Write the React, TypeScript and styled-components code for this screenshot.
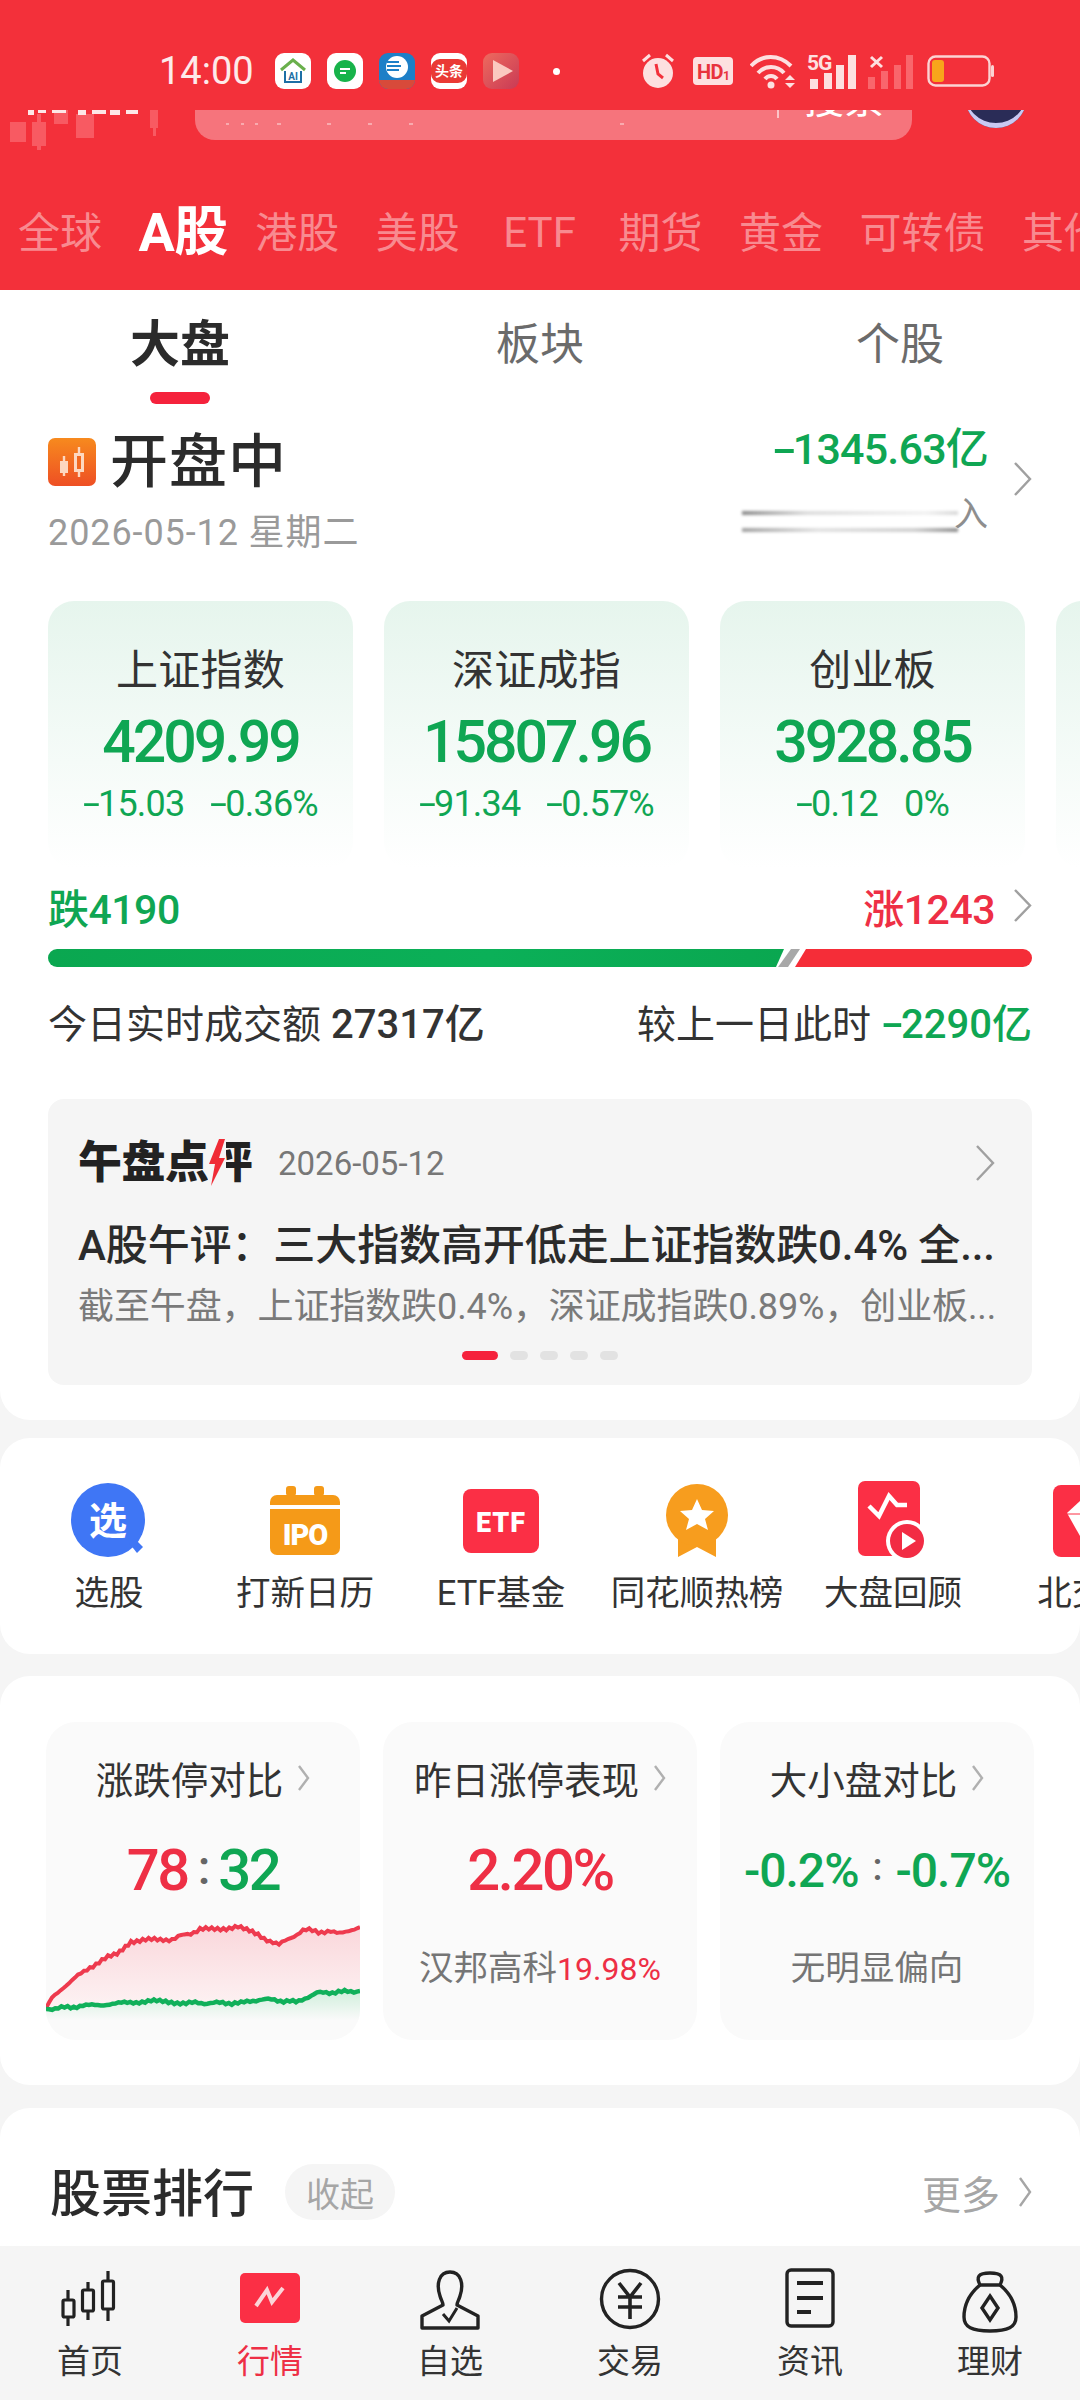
import React from 'react';
import styled, { createGlobalStyle } from 'styled-components';

const GlobalStyle = createGlobalStyle`
  html, body {
    margin: 0;
    padding: 0;
    background: #f5f5f5;
  }
  * { box-sizing: border-box; }
  body {
    font-family: Roboto, "Noto Sans CJK SC", sans-serif;
  }
`;

const GREEN = '#0fa653';
const RED = '#ee2f45';

const Page = styled.div`
  width: 1080px;
  height: 2400px;
  overflow: hidden;
  background: #f5f5f5;
  display: flex;
  flex-direction: column;
`;

/* ---------- red header ---------- */
const Header = styled.header`
  height: 290px;
  flex: none;
  background: #f3303a;
  display: flex;
  flex-direction: column;
`;

const StatusBar = styled.div`
  height: 110px;
  flex: none;
  padding: 53px 0 0 159px;
  display: flex;
  align-items: flex-start;
  color: #fdeaea;
`;

const Clock = styled.span`
  font-size: 38px;
  line-height: 36px;
  width: 116px;
  flex: none;
`;

const AppIcons = styled.div`
  display: flex;
  gap: 16px;
`;

const Tile = styled.div<{ $bg: string }>`
  width: 36px;
  height: 36px;
  border-radius: 9px;
  background: ${p => p.$bg};
  overflow: hidden;
  display: flex;
  align-items: center;
  justify-content: center;
  flex: none;
`;

const TopTile = styled(Tile)`
  color: #fff;
  font-size: 14px;
  font-weight: 700;
  box-shadow: inset 0 6px 0 #fff, inset 0 -6px 0 #fff;
  line-height: 1;
`;

const Dot = styled.span`
  width: 7px;
  height: 7px;
  border-radius: 50%;
  background: #fff;
  margin: 15px 0 0 34px;
  flex: none;
`;

const SysIcons = styled.div`
  display: flex;
  margin-left: 80px;
  height: 36px;
  align-items: center;
`;

const Glyph = styled.svg<{ $ml?: number }>`
  margin-left: ${p => p.$ml ?? 0}px;
  flex: none;
`;

const SearchRow = styled.div`
  height: 40px;
  flex: none;
  overflow: hidden;
  display: flex;
  align-items: flex-end;
  position: relative;
`;

const LogoMark = styled.svg`
  position: absolute;
  left: 10px;
  top: 0;
`;

const SearchBox = styled.div`
  margin-left: 195px;
  width: 717px;
  height: 90px;
  margin-bottom: 10px;
  flex: none;
  border-radius: 20px;
  background: #f6747c;
  display: flex;
  align-items: flex-start;
  justify-content: flex-end;
  padding: 28px 28px 0 0;
  color: #fff;
  font-size: 40px;
  line-height: 44px;
  position: relative;
`;

const SearchDivider = styled.span`
  width: 2px;
  height: 40px;
  background: #fbc4c7;
  margin: 0 25px 0 0;
`;

const PlaceholderDots = styled.svg`
  position: absolute;
  left: 30px;
  bottom: 13px;
  opacity: 0.6;
`;

const Avatar = styled.div`
  position: absolute;
  left: 965px;
  bottom: 22px;
  width: 62px;
  height: 62px;
  border-radius: 50%;
  background: #2a2c57;
  box-shadow: inset 0 -5px 0 #c9c8f2;
`;

const MarketTabs = styled.nav`
  display: flex;
  align-items: center;
  gap: 36.5px;
  padding: 0 0 0 18px;
  margin-top: 49px;
  height: 60px;
  white-space: nowrap;
  overflow: hidden;
`;

const MarketTab = styled.span<{ $active?: boolean; $latin?: boolean }>`
  font-size: ${p => (p.$active ? 54 : 42)}px;
  font-weight: ${p => (p.$active ? 700 : 400)};
  color: ${p => (p.$active ? '#fff' : '#f88a90')};
  flex: none;
  ${p => p.$active && 'margin: -3px -9px 0 0; letter-spacing: -0.5px;'}
  ${p => p.$latin && 'margin: 6px 6px 0 7px;'}
`;

/* ---------- panels ---------- */
const Panel = styled.section<{ $height: number; $gap?: number }>`
  background: #fff;
  border-radius: 30px;
  height: ${p => p.$height}px;
  margin-top: ${p => p.$gap ?? 0}px;
  flex: none;
  overflow: hidden;
`;

const MainPanel = styled(Panel)`
  border-radius: 0 0 30px 30px;
  padding: 0 48px;
`;

const RankPanel = styled(Panel)`
  border-radius: 30px 30px 0 0;
`;

const SegTabs = styled.div`
  display: grid;
  grid-template-columns: repeat(3, 360px);
  margin: 0 -48px;
  height: 122px;
`;

const SegTab = styled.div<{ $active?: boolean }>`
  position: relative;
  text-align: center;
  padding-top: 24px;
  font-size: ${p => (p.$active ? 50 : 44)}px;
  line-height: 62px;
  font-weight: ${p => (p.$active ? 700 : 400)};
  color: ${p => (p.$active ? '#2b2b2b' : '#6b6b6b')};
`;

const SegMark = styled.span`
  position: absolute;
  left: 150px;
  top: 102px;
  width: 60px;
  height: 12px;
  border-radius: 6px;
  background: #f5223c;
`;

const SessionRow = styled.div`
  height: 189px;
  display: flex;
  justify-content: space-between;
`;

const SessionLeft = styled.div`
  padding-top: 22px;
`;

const SessionTitle = styled.div`
  display: flex;
  align-items: center;
  gap: 14px;
  font-size: 58px;
  line-height: 58px;
  font-weight: 500;
  color: #2b2b2b;
  letter-spacing: 1px;
  margin-top: -1px;
`;

const SessionDate = styled.div`
  margin-top: 20px;
  font-size: 36px;
  line-height: 44px;
  color: #9a9a9a;
  letter-spacing: 0.9px;
`;

const SessionRight = styled.div`
  position: relative;
  width: 290px;
  padding: 12px 44px 0 0;
  text-align: right;
`;

const NetFlow = styled.div`
  font-size: 43px;
  line-height: 50px;
  font-weight: 500;
  color: ${GREEN};
  white-space: nowrap;
  letter-spacing: -0.8px;
`;

const NetLabel = styled.div`
  margin-top: 18px;
  font-size: 34px;
  line-height: 44px;
  color: #8e8e8e;
`;

const Smudge = styled.span<{ $top: number; $fade: string }>`
  position: absolute;
  left: 0;
  top: ${p => p.$top}px;
  width: 216px;
  height: 4px;
  background: ${p => p.$fade};
  filter: blur(1.5px);
`;

const ChevronBox = styled.svg`
  flex: none;
  display: block;
`;

const SessionChevron = styled(ChevronBox)`
  position: absolute;
  right: 0;
  top: 50px;
`;

// the minus sign of this app's digit font is about twice as wide as a hyphen
const Neg = styled.span`
  display: inline-block;
  transform: scaleX(1.7);
  transform-origin: left center;
  margin-right: 0.16em;
`;

const signed = (value: string) =>
  value.startsWith('-') ? (
    <>
      <Neg>-</Neg>
      {value.slice(1)}
    </>
  ) : (
    value
  );

const IndexScroller = styled.div`
  display: flex;
  gap: 31px;
  margin-right: -48px;
  height: 267px;
  overflow: hidden;
`;

const IndexCard = styled.div`
  width: 305px;
  height: 267px;
  flex: none;
  border-radius: 26px;
  background: linear-gradient(180deg, #e6f5ed 0%, #f5fbf8 60%, #ffffff 100%);
  text-align: center;
  padding-top: 46px;
`;

const IndexName = styled.div`
  font-size: 42px;
  line-height: 48px;
  color: #333;
  letter-spacing: 0.2px;
`;

const IndexValue = styled.div`
  margin-top: 14px;
  font-size: 59px;
  line-height: 66px;
  font-weight: 500;
  color: ${GREEN};
  letter-spacing: -3px;
`;

const IndexChange = styled.div`
  margin-top: 9px;
  font-size: 36px;
  line-height: 40px;
  color: ${GREEN};
  display: flex;
  justify-content: center;
  gap: 26px;
  letter-spacing: -0.8px;
`;

const BreadthRow = styled.div`
  height: 81px;
  display: flex;
  align-items: center;
  font-size: 41px;
  font-weight: 500;
  padding-bottom: 6px;
  letter-spacing: -0.5px;
`;

const Fall = styled.span`
  color: ${GREEN};
`;

const Rise = styled.span`
  color: ${RED};
  margin-left: auto;
  margin-right: 18px;
`;

const Bar = styled.div`
  display: flex;
  height: 18px;
`;

const BarFall = styled.div`
  width: 736px;
  flex: none;
  background: linear-gradient(90deg, #0aa750, #0bb058 60%, #0aa750);
  border-radius: 9px 0 0 9px;
  clip-path: polygon(0 0, 100% 0, calc(100% - 8px) 100%, 0 100%);
`;

const BarFlat = styled.div`
  width: 22px;
  flex: none;
  margin-left: -6px;
  background: #a8a8a8;
  clip-path: polygon(13px 0, 100% 0, 10px 100%, 0 100%);
`;

const BarRise = styled.div`
  flex: 1;
  margin-left: -5px;
  background: #f52d38;
  border-radius: 0 9px 9px 0;
  clip-path: polygon(11px 0, 100% 0, 100% 100%, 0 100%);
`;

const TurnoverRow = styled.div`
  height: 116px;
  padding-bottom: 8px;
  display: flex;
  align-items: center;
  justify-content: space-between;
  font-size: 39px;
  color: #333;
`;

const TurnoverValue = styled.b<{ $green?: boolean }>`
  font-weight: 500;
  margin-left: 10px;
  font-size: 40px;
  color: ${p => (p.$green ? GREEN : '#333')};
`;

const NewsCard = styled.div`
  margin-top: 16px;
  height: 286px;
  border-radius: 16px;
  background: #f5f5f5;
  padding: 36px 30px 0;
  position: relative;
`;

const NewsHead = styled.div`
  display: flex;
  align-items: center;
  height: 56px;
`;

const NewsBrand = styled.div`
  position: relative;
  font-size: 44px;
  font-weight: 900;
  line-height: 56px;
  color: #222;
  letter-spacing: -0.5px;
  margin-right: 26px;
`;

const BrandBolt = styled.svg`
  position: absolute;
  left: 130px;
  top: 4px;
`;

const NewsDate = styled.span`
  font-size: 33px;
  color: #777;
`;

const NewsChevron = styled(ChevronBox)`
  margin-left: auto;
  margin-right: 7px;
`;

const NewsTitle = styled.div`
  margin-top: 28px;
  font-size: 42px;
  line-height: 54px;
  font-weight: 500;
  color: #2b2b2b;
  white-space: nowrap;
  letter-spacing: -0.1px;
`;

const NewsText = styled.div`
  margin-top: 8px;
  font-size: 36px;
  line-height: 52px;
  color: #7a7a7a;
  white-space: nowrap;
  letter-spacing: -0.1px;
`;

const Pager = styled.div`
  position: absolute;
  left: 414px;
  top: 252px;
  display: flex;
  align-items: center;
  gap: 12px;
`;

const PagerDot = styled.span<{ $active?: boolean }>`
  width: ${p => (p.$active ? 36 : 18)}px;
  height: 9px;
  border-radius: 5px;
  background: ${p => (p.$active ? '#f5223c' : '#e2e2e2')};
`;

/* ---------- shortcut row ---------- */
const Shortcuts = styled.div`
  display: flex;
  padding: 40px 0 0 11px;
`;

const Shortcut = styled.div`
  width: 196px;
  flex: none;
  display: flex;
  flex-direction: column;
  align-items: center;
  font-size: 34.5px;
  color: #333;
  white-space: nowrap;
`;

const ShortcutIcon = styled.div`
  height: 85px;
  display: flex;
  align-items: center;
  justify-content: center;
`;

const ShortcutLabel = styled.span`
  line-height: 60px;
`;

/* ---------- stat cards ---------- */
const StatGrid = styled.div`
  display: grid;
  grid-template-columns: repeat(3, 314px);
  gap: 23px;
  padding: 46px 0 0 46px;
`;

const StatCard = styled.div`
  height: 318px;
  border-radius: 30px;
  background: #fafafa;
  overflow: hidden;
  text-align: center;
`;

const StatTitle = styled.div`
  height: 116px;
  padding-bottom: 5px;
  display: flex;
  align-items: center;
  justify-content: center;
  gap: 14px;
  font-size: 37.5px;
  color: #333;
`;

const StatValue = styled.div`
  height: 64px;
  display: flex;
  align-items: center;
  justify-content: center;
  font-size: 58px;
  font-weight: 500;
  color: ${RED};
  gap: 10px;
  letter-spacing: -2.4px;
`;

const SmallValue = styled(StatValue)`
  font-size: 48px;
  gap: 14px;
  color: ${GREEN};
  letter-spacing: -1px;
`;

const Colon = styled.span<{ $small?: boolean }>`
  color: #666;
  font-size: ${p => (p.$small ? 38 : 48)}px;
  margin-top: -6px;
`;

const GreenNum = styled.span`
  color: ${GREEN};
`;

const StatSub = styled.div`
  margin-top: 43px;
  height: 46px;
  font-size: 34.5px;
  line-height: 46px;
  color: #757575;
  white-space: nowrap;
`;

const SubRed = styled.span`
  color: ${RED};
  font-size: 32px;
`;

const Spark = styled.svg`
  display: block;
  margin-top: 18px;
`;

/* ---------- ranking ---------- */
const RankHead = styled.div`
  display: flex;
  align-items: center;
  padding: 53px 48px 0 50px;
`;

const RankTitle = styled.span`
  font-size: 51px;
  line-height: 56px;
  padding-top: 6px;
  font-weight: 500;
  color: #2b2b2b;
`;

const CollapseChip = styled.span`
  margin-left: 31px;
  width: 110px;
  height: 56px;
  border-radius: 28px;
  background: #f5f5f5;
  color: #a6a6a6;
  font-size: 34px;
  display: flex;
  align-items: center;
  justify-content: center;
`;

const More = styled.span`
  margin-left: auto;
  margin-right: 18px;
  font-size: 39px;
  color: #a6a6a6;
`;

/* ---------- bottom tab bar ---------- */
const TabBar = styled.nav`
  height: 154px;
  flex: none;
  display: grid;
  grid-template-columns: repeat(6, 180px);
  background: #f5f5f5;
`;

const TabItem = styled.div<{ $active?: boolean }>`
  display: flex;
  flex-direction: column;
  align-items: center;
  font-size: 33px;
  color: ${p => (p.$active ? RED : '#333')};
`;

const TabIcon = styled.div<{ $top: number }>`
  height: 92px;
  padding-top: ${p => p.$top}px;
  display: flex;
  align-items: flex-start;
  justify-content: center;
`;

const TabLabel = styled.span`
  line-height: 48px;
`;

const Chevron = ({ w = 19, h = 33, color = '#a0a0a0' }: { w?: number; h?: number; color?: string }) => (
  <ChevronBox width={w} height={h} viewBox={`0 0 ${w} ${h}`} fill="none">
    <polyline points={`2,1 ${w - 2},${h / 2} 2,${h - 1}`} stroke={color} strokeWidth="2.4" />
  </ChevronBox>
);

// rough intraday line, small ripple is added so it reads like tick data
const ripple = (pts: number[][], amp: number) => {
  const out: string[] = [];
  for (let i = 0; i < pts.length - 1; i++) {
    const [x0, y0] = pts[i];
    const [x1, y1] = pts[i + 1];
    const steps = Math.max(1, Math.round((x1 - x0) / 3));
    for (let s = 0; s < steps; s++) {
      const x = x0 + ((x1 - x0) * s) / steps;
      const y = y0 + ((y1 - y0) * s) / steps + Math.sin(x * 1.7) * Math.cos(x * 0.61) * amp;
      out.push(`${x.toFixed(1)},${y.toFixed(1)}`);
    }
  }
  const last = pts[pts.length - 1];
  out.push(`${last[0]},${last[1]}`);
  return out;
};

const redLine = ripple(
  [[0, 88], [6, 76], [23, 63], [44, 47], [71, 33], [85, 21], [126, 19], [154, 10], [192, 7], [212, 15], [233, 25], [257, 10], [291, 13], [314, 7]],
  2.4
);
const greenLine = ripple(
  [[0, 89], [37, 86], [105, 81], [140, 83], [195, 83], [216, 79], [250, 82], [271, 73], [314, 71]],
  1.8
);

const SparkChart = () => (
  <Spark width="314" height="120" viewBox="0 0 314 120">
    <defs>
      <linearGradient id="riseFill" x1="0" y1="0" x2="0" y2="1">
        <stop offset="0" stopColor="#fad7db" />
        <stop offset="1" stopColor="#fdf3f4" />
      </linearGradient>
      <linearGradient id="fallFill" x1="0" y1="0" x2="0" y2="1">
        <stop offset="0" stopColor="#cfeedb" />
        <stop offset="1" stopColor="#fafafa" />
      </linearGradient>
    </defs>
    <polygon points={`${redLine.join(' ')} ${[...greenLine].reverse().join(' ')}`} fill="url(#riseFill)" />
    <polygon points={`${greenLine.join(' ')} 314,100 0,100`} fill="url(#fallFill)" />
    <polyline points={redLine.join(' ')} fill="none" stroke="#ee3a4e" strokeWidth="4" />
    <polyline points={greenLine.join(' ')} fill="none" stroke="#10b05a" strokeWidth="4.5" />
  </Spark>
);

const PickIcon = () => (
  <svg width="76" height="76" viewBox="0 0 76 76">
    <circle cx="37" cy="37" r="37" fill="#3f76f5" />
    <path d="M58 60 L66 70 L72 64 L63 55 Z" fill="#3f76f5" />
    <text x="37" y="51" textAnchor="middle" fontSize="38" fontWeight="700" fill="#fff" fontFamily="Noto Sans CJK SC">选</text>
  </svg>
);

const IpoIcon = () => (
  <svg width="70" height="70" viewBox="0 0 70 70">
    <rect x="16" y="0" width="10" height="10" rx="3" fill="#f59a18" />
    <rect x="44" y="0" width="10" height="10" rx="3" fill="#f59a18" />
    <path d="M0 16 a7 7 0 0 1 7-7 H63 a7 7 0 0 1 7 7 V19 H0 Z" fill="#f59a18" />
    <path d="M0 23 H70 V62 a7 7 0 0 1-7 7 H7 a7 7 0 0 1-7-7 Z" fill="#f59a18" />
    <text x="35" y="59" textAnchor="middle" fontSize="29" fontWeight="900" letterSpacing="-1" fill="#fff" fontFamily="Roboto">IPO</text>
  </svg>
);

const EtfIcon = () => (
  <svg width="76" height="64" viewBox="0 0 76 64">
    <rect width="76" height="64" rx="8" fill="#fb2f45" />
    <text x="38" y="43" textAnchor="middle" fontSize="27" fontWeight="900" letterSpacing="1" fill="#fff" fontFamily="Roboto">ETF</text>
  </svg>
);

const MedalIcon = () => (
  <svg width="62" height="74" viewBox="0 0 62 74">
    <path d="M12 50 V73 L31 63 L50 73 V50 Z" fill="#f79d1e" />
    <circle cx="31" cy="31" r="31" fill="#f79d1e" />
    <polygon points="31,15 36,26 48,27 39,35 42,46 31,40 20,46 23,35 14,27 26,26" fill="#fff" />
  </svg>
);

const ReplayIcon = () => (
  <svg width="70" height="80" viewBox="0 0 70 80">
    <rect width="62" height="75" rx="7" fill="#fb2f45" />
    <polyline points="11,25 21,35 31,15 39,24 49,24" fill="none" stroke="#fff" strokeWidth="4.5" />
    <circle cx="49" cy="60" r="21" fill="#fff" />
    <circle cx="49" cy="60" r="17" fill="#f22c44" />
    <polygon points="44,51 44,69 58,60" fill="#fff" />
  </svg>
);

const BeijingIcon = () => (
  <svg width="72" height="72" viewBox="0 0 72 72">
    <rect width="80" height="72" rx="8" fill="#fb2f45" />
    <path d="M14 28 L28 15 H60 V45 L32 60 Z" fill="#fff" />
    <path d="M14 29 H30" stroke="#fb2f45" strokeWidth="1" />
  </svg>
);

const CandleIcon = () => (
  <svg width="60" height="56" viewBox="0 0 60 56" fill="none" stroke="#222" strokeWidth="3.2">
    <path d="M8 19 V29 M8 46 V55" />
    <rect x="3" y="29" width="11" height="17" rx="1.5" />
    <path d="M28 11 V19 M28 40 V49" />
    <rect x="22.5" y="19" width="11" height="21" rx="1.5" />
    <path d="M48 0 V10 M48 38 V50" />
    <rect x="42.5" y="10" width="11" height="28" rx="1.5" />
  </svg>
);

const QuoteIcon = () => (
  <svg width="60" height="50" viewBox="0 0 60 50">
    <rect width="60" height="50" rx="5" fill="#fb2f45" />
    <polyline points="16,33 27,17 32,29 43,15" fill="none" stroke="#fbd5d8" strokeWidth="4" />
  </svg>
);

const PersonIcon = () => (
  <svg width="62" height="60" viewBox="0 0 62 60" fill="none" stroke="#222" strokeWidth="3.4">
    <path d="M21 26 C17 14 20 2 31 2 C42 2 45 14 41 26 C40 30 38 32 38 35 L59 46 V58 H3 V46 L24 35 C24 32 22 30 21 26 Z" strokeLinejoin="round" />
    <polyline points="24,44 30,51 38,38" strokeWidth="3" />
  </svg>
);

const YenIcon = () => (
  <svg width="62" height="62" viewBox="0 0 62 62" fill="none" stroke="#222" strokeWidth="3.4">
    <circle cx="31" cy="31" r="28.5" />
    <path d="M20 15 L31 29 L42 15 M19 29 H43 M19 39 H43 M31 29 V51" strokeWidth="3.6" />
  </svg>
);

const DocIcon = () => (
  <svg width="50" height="60" viewBox="0 0 50 60" fill="none" stroke="#222" strokeWidth="3.4">
    <rect x="2" y="2" width="46" height="56" rx="4" />
    <path d="M12 15 H38 M12 30 H38 M12 44 H26" strokeWidth="3.8" />
  </svg>
);

const BagIcon = () => (
  <svg width="56" height="62" viewBox="0 0 56 62" fill="none" stroke="#222" strokeWidth="3.4">
    <path d="M18 14 C14 6 16 2 28 2 C40 2 42 6 38 14 Z" strokeLinejoin="round" />
    <path d="M18 14 C6 24 2 36 2 46 C2 56 10 60 28 60 C46 60 54 56 54 46 C54 36 50 24 38 14" />
    <polygon points="28,25 36,37 28,49 20,37" />
  </svg>
);

const indices = [
  { name: '上证指数', value: '4209.99', diff: '-15.03', pct: '-0.36%' },
  { name: '深证成指', value: '15807.96', diff: '-91.34', pct: '-0.57%' },
  { name: '创业板', value: '3928.85', diff: '-0.12', pct: '0%' },
  { name: '', value: '', diff: '', pct: '' },
];

const shortcuts: [string, React.ReactNode][] = [
  ['选股', <PickIcon />],
  ['打新日历', <IpoIcon />],
  ['ETF基金', <EtfIcon />],
  ['同花顺热榜', <MedalIcon />],
  ['大盘回顾', <ReplayIcon />],
  ['北交所', <BeijingIcon />],
];

const tabs: [string, React.ReactNode, number][] = [
  ['首页', <CandleIcon />, 25],
  ['行情', <QuoteIcon />, 27],
  ['自选', <PersonIcon />, 24],
  ['交易', <YenIcon />, 22],
  ['资讯', <DocIcon />, 22],
  ['理财', <BagIcon />, 25],
];

const StatusIcons = () => (
  <SysIcons>
    <Glyph width="36" height="38" viewBox="0 0 36 38">
      <circle cx="18" cy="21" r="15" fill="#fde0e0" />
      <path d="M3 9 L10 3 M33 9 L26 3" stroke="#fde0e0" strokeWidth="3" />
      <path d="M16 12 L18 22 L23 26" stroke="#f3303a" strokeWidth="3" fill="none" />
    </Glyph>
    <Glyph $ml={17} width="40" height="28" viewBox="0 0 40 28">
      <rect width="40" height="28" rx="4" fill="#fde0e0" />
      <text x="4" y="22" fontSize="20" fontWeight="700" fill="#e8333d" fontFamily="Roboto" letterSpacing="-0.5">HD</text>
      <text x="30" y="23" fontSize="12" fontWeight="700" fill="#e8333d" fontFamily="Roboto">1</text>
    </Glyph>
    <Glyph $ml={17} width="46" height="36" viewBox="0 0 46 36" fill="none" stroke="#fde0e0" strokeWidth="4">
      <path d="M1 13 C12 1 29 1 41 13" />
      <path d="M8 20 C15 12 27 12 34 20" />
      <path d="M15 26 C18 22 24 22 27 26" />
      <circle cx="21" cy="32" r="3.5" fill="#fde0e0" stroke="none" />
      <polygon points="40,22 45,27 35,27" fill="#fde0e0" stroke="none" />
      <polygon points="35,30 45,30 40,35" fill="#fde0e0" stroke="none" />
    </Glyph>
    <Glyph $ml={11} width="50" height="36" viewBox="0 0 50 36">
      <text x="0" y="17" fontSize="21" fontWeight="700" fill="#fde0e0" fontFamily="Roboto" letterSpacing="-1">5G</text>
      <rect x="3" y="26" width="8" height="10" fill="#fde0e0" />
      <rect x="17" y="20" width="8" height="16" fill="#fde0e0" />
      <rect x="29" y="12" width="8" height="24" fill="#fde0e0" />
      <rect x="41" y="2" width="8" height="34" fill="#fde0e0" />
    </Glyph>
    <Glyph $ml={11} width="46" height="36" viewBox="0 0 46 36">
      <path d="M3 4 L14 14 M14 4 L3 14" stroke="#fde0e0" strokeWidth="3" />
      <rect x="0" y="24" width="7" height="12" fill="#f9666c" />
      <rect x="13" y="18" width="7" height="18" fill="#f9666c" />
      <rect x="26" y="12" width="7" height="24" fill="#f9666c" />
      <rect x="38" y="2" width="7" height="34" fill="#f9666c" />
    </Glyph>
    <Glyph $ml={13} width="68" height="32" viewBox="0 0 68 32">
      <rect x="1.5" y="1.5" width="61" height="29" rx="7" fill="none" stroke="#fbd3d3" strokeWidth="2.4" />
      <rect x="5" y="5" width="12" height="22" rx="3" fill="#f8a51b" />
      <rect x="64" y="10" width="3" height="12" rx="1.5" fill="#fbd3d3" />
    </Glyph>
  </SysIcons>
);

const App: React.FC = () => {
  return (
    <Page>
      <GlobalStyle />
      <Header>
        <StatusBar>
          <Clock>14:00</Clock>
          <AppIcons>
            <Tile $bg="#fff">
              <svg width="28" height="28" viewBox="0 0 28 28" fill="none">
                <path d="M2 13 L14 3 L26 13" stroke="#6ab04c" strokeWidth="3" />
                <path d="M6 14 V25 H22 V14" stroke="#1d6fa5" strokeWidth="2" />
                <text x="14" y="23" textAnchor="middle" fontSize="10" fontWeight="700" fill="#1d6fa5" fontFamily="Roboto">AI</text>
              </svg>
            </Tile>
            <Tile $bg="#fff">
              <svg width="24" height="24" viewBox="0 0 24 24">
                <circle cx="12" cy="12" r="11" fill="#17b34a" />
                <path d="M7 10 H17 M7 14 H13" stroke="#fff" strokeWidth="2" />
              </svg>
            </Tile>
            <Tile $bg="#1d7fc7">
              <svg width="36" height="36" viewBox="0 0 36 36">
                <circle cx="18" cy="14" r="11" fill="#fff" />
                <path d="M8 9 H20 M8 13 H22 M8 17 H20" stroke="#1d7fc7" strokeWidth="2" />
                <rect x="0" y="27" width="36" height="9" fill="#d84a3a" />
              </svg>
            </Tile>
            <TopTile $bg="#ea3a35">头条</TopTile>
            <Tile $bg="linear-gradient(135deg, #ee6a5e, #c93a55)">
              <svg width="36" height="36" viewBox="0 0 36 36">
                <polygon points="10,7 30,18 10,29" fill="#fbc9c0" />
              </svg>
            </Tile>
          </AppIcons>
          <Dot />
          <StatusIcons />
        </StatusBar>

        <SearchRow>
          <LogoMark width="150" height="40" viewBox="0 0 150 40">
            <g fill="#f85a62">
              <rect x="0" y="12" width="16" height="20" />
              <rect x="22" y="12" width="14" height="24" />
              <rect x="27" y="4" width="4" height="36" />
              <rect x="44" y="0" width="14" height="14" />
              <rect x="66" y="4" width="18" height="24" />
              <rect x="140" y="0" width="8" height="18" />
              <rect x="143" y="14" width="3" height="12" />
            </g>
            <g fill="#fde6e6">
              <rect x="18" y="0" width="6" height="5" />
              <rect x="28" y="0" width="8" height="3" />
              <rect x="42" y="0" width="14" height="3" />
              <rect x="68" y="0" width="8" height="5" />
              <rect x="82" y="0" width="14" height="4" />
              <rect x="100" y="0" width="10" height="5" />
              <rect x="116" y="0" width="12" height="4" />
            </g>
          </LogoMark>
          <SearchBox>
            <PlaceholderDots width="400" height="6" viewBox="0 0 400 6" fill="#fbd0d2">
              <rect x="1" y="2" width="3" height="2" />
              <rect x="16" y="2" width="3" height="2" />
              <rect x="30" y="2" width="3" height="2" />
              <rect x="52" y="2" width="4" height="2" />
              <rect x="102" y="2" width="4" height="2" />
              <rect x="143" y="2" width="4" height="2" />
              <rect x="184" y="2" width="4" height="2" />
              <rect x="395" y="2" width="4" height="2" />
            </PlaceholderDots>
            <SearchDivider />
            搜索
          </SearchBox>
          <Avatar />
        </SearchRow>

        <MarketTabs>
          <MarketTab>全球</MarketTab>
          <MarketTab $active>A股</MarketTab>
          <MarketTab>港股</MarketTab>
          <MarketTab>美股</MarketTab>
          <MarketTab $latin>ETF</MarketTab>
          <MarketTab>期货</MarketTab>
          <MarketTab>黄金</MarketTab>
          <MarketTab>可转债</MarketTab>
          <MarketTab>其他</MarketTab>
        </MarketTabs>
      </Header>

      <MainPanel $height={1130}>
        <SegTabs>
          <SegTab $active>
            大盘
            <SegMark />
          </SegTab>
          <SegTab>板块</SegTab>
          <SegTab>个股</SegTab>
        </SegTabs>

        <SessionRow>
          <SessionLeft>
            <SessionTitle>
              <svg width="48" height="48" viewBox="0 0 48 48">
                <defs>
                  <linearGradient id="sessionBg" x1="0" y1="0" x2="0" y2="1">
                    <stop offset="0" stopColor="#f78a1e" />
                    <stop offset="1" stopColor="#ee4f24" />
                  </linearGradient>
                </defs>
                <rect width="48" height="48" rx="7" fill="url(#sessionBg)" />
                <path d="M16 18 V38 M31 9 V39" stroke="#fdd8c0" strokeWidth="2.4" />
                <rect x="12" y="23" width="8" height="12" fill="#fdd8c0" />
                <rect x="26" y="15" width="10" height="19" fill="#fdd8c0" />
                <rect x="29" y="18" width="4" height="13" fill="#f2691f" />
              </svg>
              开盘中
            </SessionTitle>
            <SessionDate>2026-05-12 星期二</SessionDate>
          </SessionLeft>
          <SessionRight>
            <NetFlow>{signed('-1345.63亿')}</NetFlow>
            <NetLabel>入</NetLabel>
            <Smudge $top={99} $fade="linear-gradient(90deg, #8a8a8a, #dcdcdc 30%, #f2f2f2 85%, #d8d8d8)" />
            <Smudge $top={116} $fade="linear-gradient(90deg, #a0a0a0, #e2e2e2 35%, #cfcfcf 80%, #8c8c8c)" />
            <SessionChevron width="19" height="34" viewBox="0 0 19 34" fill="none">
              <polyline points="2,1 17,17 2,33" stroke="#a0a0a0" strokeWidth="2.4" />
            </SessionChevron>
          </SessionRight>
        </SessionRow>

        <IndexScroller>
          {indices.map((item, i) => (
            <IndexCard key={i}>
              <IndexName>{item.name}</IndexName>
              <IndexValue>{item.value}</IndexValue>
              <IndexChange>
                <span>{signed(item.diff)}</span>
                <span>{signed(item.pct)}</span>
              </IndexChange>
            </IndexCard>
          ))}
        </IndexScroller>

        <BreadthRow>
          <Fall>跌4190</Fall>
          <Rise>涨1243</Rise>
          <Chevron />
        </BreadthRow>

        <Bar>
          <BarFall />
          <BarFlat />
          <BarRise />
        </Bar>

        <TurnoverRow>
          <span>
            今日实时成交额<TurnoverValue>27317亿</TurnoverValue>
          </span>
          <span>
            较上一日此时<TurnoverValue $green>{signed('-2290亿')}</TurnoverValue>
          </span>
        </TurnoverRow>

        <NewsCard>
          <NewsHead>
            <NewsBrand>
              午盘点评
              <BrandBolt width="18" height="48" viewBox="0 0 18 48">
                <rect width="18" height="48" fill="#f5f5f5" />
                <polygon points="11,0 17,0 11,19 17,19 3,47 7,25 1,25" fill="#f02b36" />
              </BrandBolt>
            </NewsBrand>
            <NewsDate>2026-05-12</NewsDate>
            <NewsChevron width="20" height="36" viewBox="0 0 20 36" fill="none">
              <polyline points="2,1 18,18 2,35" stroke="#a0a0a0" strokeWidth="2.4" />
            </NewsChevron>
          </NewsHead>
          <NewsTitle>A股午评：三大指数高开低走上证指数跌0.4% 全...</NewsTitle>
          <NewsText>截至午盘，上证指数跌0.4%，深证成指跌0.89%，创业板...</NewsText>
          <Pager>
            <PagerDot $active />
            <PagerDot />
            <PagerDot />
            <PagerDot />
            <PagerDot />
          </Pager>
        </NewsCard>
      </MainPanel>

      <Panel $height={216} $gap={18}>
        <Shortcuts>
          {shortcuts.map(([label, icon]) => (
            <Shortcut key={label}>
              <ShortcutIcon>{icon}</ShortcutIcon>
              <ShortcutLabel>{label}</ShortcutLabel>
            </Shortcut>
          ))}
        </Shortcuts>
      </Panel>

      <Panel $height={409} $gap={22}>
        <StatGrid>
          <StatCard>
            <StatTitle>
              涨跌停对比
              <Chevron w={13} h={26} color="#b0b0b0" />
            </StatTitle>
            <StatValue>
              78<Colon>:</Colon><GreenNum>32</GreenNum>
            </StatValue>
            <SparkChart />
          </StatCard>
          <StatCard>
            <StatTitle>
              昨日涨停表现
              <Chevron w={13} h={26} color="#b0b0b0" />
            </StatTitle>
            <StatValue>2.20%</StatValue>
            <StatSub>
              汉邦高科<SubRed>19.98%</SubRed>
            </StatSub>
          </StatCard>
          <StatCard>
            <StatTitle>
              大小盘对比
              <Chevron w={13} h={26} color="#b0b0b0" />
            </StatTitle>
            <SmallValue>
              -0.2%<Colon $small>:</Colon>-0.7%
            </SmallValue>
            <StatSub>无明显偏向</StatSub>
          </StatCard>
        </StatGrid>
      </Panel>

      <RankPanel $height={138} $gap={23}>
        <RankHead>
          <RankTitle>股票排行</RankTitle>
          <CollapseChip>收起</CollapseChip>
          <More>更多</More>
          <Chevron w={14} h={30} color="#a6a6a6" />
        </RankHead>
      </RankPanel>

      <TabBar>
        {tabs.map(([label, icon, top], i) => (
          <TabItem key={label} $active={i === 1}>
            <TabIcon $top={top}>{icon}</TabIcon>
            <TabLabel>{label}</TabLabel>
          </TabItem>
        ))}
      </TabBar>
    </Page>
  );
};

export default App;
